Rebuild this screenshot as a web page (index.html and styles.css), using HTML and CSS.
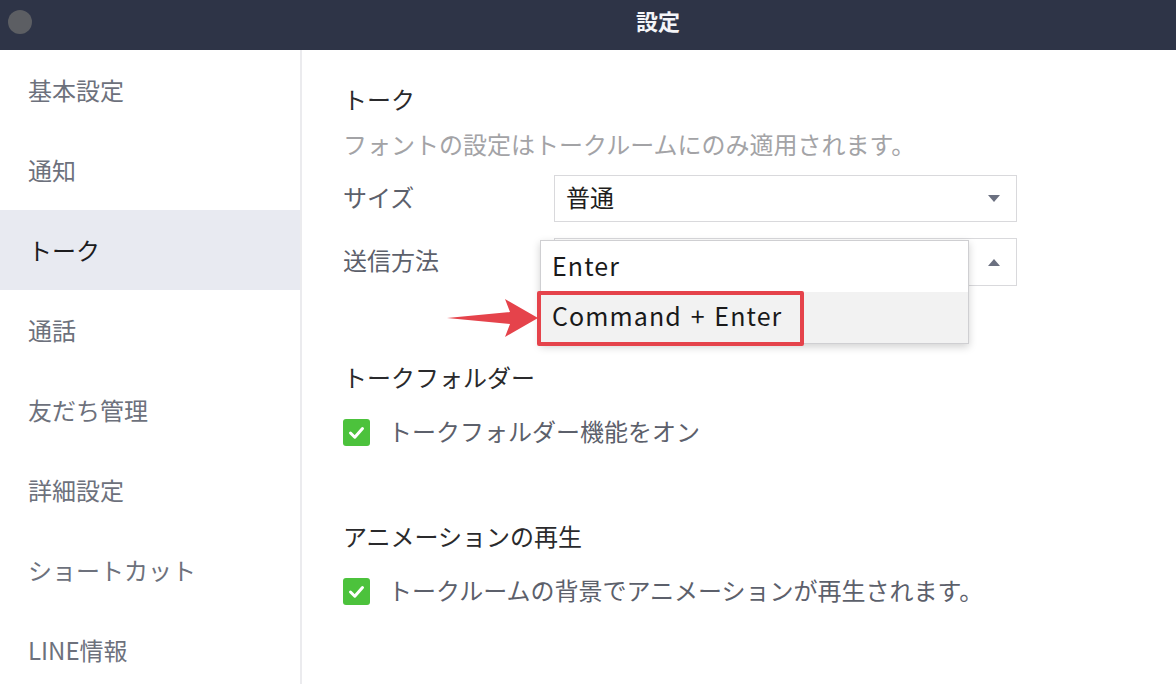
FILE: index.html
```html
<!DOCTYPE html>
<html lang="ja">
<head>
<meta charset="utf-8">
<title>設定</title>
<link rel="stylesheet" href="styles.css">
</head>
<body>
<div class="window">
  <header class="titlebar">
    <span class="dot"></span>
    <span class="title">設定</span>
  </header>
  <div class="main">
    <nav class="sidebar">
      <div class="nav-item">基本設定</div>
      <div class="nav-item">通知</div>
      <div class="nav-item active">トーク</div>
      <div class="nav-item">通話</div>
      <div class="nav-item">友だち管理</div>
      <div class="nav-item">詳細設定</div>
      <div class="nav-item">ショートカット</div>
      <div class="nav-item">LINE情報</div>
    </nav>
    <section class="content">
      <h2 class="heading first">トーク</h2>
      <p class="sub">フォントの設定はトークルームにのみ適用されます。</p>
      <div class="row">
        <span class="label">サイズ</span>
        <div class="select">
          <span class="value">普通</span>
          <span class="tri down"></span>
        </div>
      </div>
      <div class="row row2">
        <span class="label">送信方法</span>
        <div class="select tall">
          <span class="value"></span>
          <span class="tri up"></span>
          <div class="menu">
            <div class="opt">Enter</div>
            <div class="opt hover">Command + Enter</div>
            <div class="highlight"></div>
          </div>
          <svg class="pointer" width="96" height="50" viewBox="0 0 96 50">
            <polygon points="0,27 63,21 58,8 91,27 58,46 63,33" fill="#e5434b"/>
          </svg>
        </div>
      </div>
      <h2 class="heading sec">トークフォルダー</h2>
      <div class="check-row">
        <span class="check"><svg width="27" height="27" viewBox="0 0 27 27"><path d="M7.5 14 L11.8 18.2 L19.5 9.5" fill="none" stroke="#fff" stroke-width="3" stroke-linecap="round" stroke-linejoin="round"/></svg></span>
        <span class="check-text">トークフォルダー機能をオン</span>
      </div>
      <h2 class="heading sec">アニメーションの再生</h2>
      <div class="check-row">
        <span class="check"><svg width="27" height="27" viewBox="0 0 27 27"><path d="M7.5 14 L11.8 18.2 L19.5 9.5" fill="none" stroke="#fff" stroke-width="3" stroke-linecap="round" stroke-linejoin="round"/></svg></span>
        <span class="check-text">トークルームの背景でアニメーションが再生されます。</span>
      </div>
    </section>
  </div>
</div>
</body>
</html>
```

FILE: styles.css
```css
* { box-sizing: border-box; }
html, body {
  margin: 0;
  padding: 0;
  background: #fff;
}
body {
  font-family: "Noto Sans CJK JP", "Noto Sans", sans-serif;
  width: 1176px;
  height: 684px;
  overflow: hidden;
}
.titlebar {
  height: 50px;
  background: #2e3447;
  display: flex;
  align-items: flex-start;
}
.dot {
  width: 24px;
  height: 24px;
  border-radius: 50%;
  background: #5c5e63;
  margin: 10px 0 0 8px;
  flex: none;
}
.title {
  margin-left: 604px;
  color: #f4f5f8;
  font-size: 22px;
  font-weight: 700;
  line-height: 40px;
}
.main {
  display: flex;
  height: 634px;
}
.sidebar {
  width: 302px;
  flex: none;
  border-right: 2px solid #ebebee;
}
.nav-item {
  height: 80px;
  display: flex;
  align-items: center;
  padding-left: 28px;
  padding-bottom: 2px;
  font-size: 24px;
  color: #6d717c;
}
.nav-item.active {
  background: #e8eaf1;
  color: #1c1c1e;
}
.content {
  flex: 1;
  padding-left: 41px;
}
.heading {
  margin: 0;
  font-size: 24px;
  font-weight: 400;
  line-height: 32px;
  color: #2a2a2c;
}
.heading.first { margin-top: 33px; }
.heading.sec { margin-top: 75px; }
.check-row + .heading.sec { margin-top: 72px; }
.sub {
  margin: 13px 0 0;
  font-size: 24px;
  line-height: 32px;
  color: #a3a3a6;
}
.row {
  display: flex;
  align-items: center;
  margin-top: 15px;
}
.row2 { margin-top: 16px; }
.label {
  width: 211px;
  flex: none;
  font-size: 24px;
  color: #5c606b;
  padding-bottom: 5px;
}
.select {
  position: relative;
  width: 463px;
  height: 47px;
  border: 1px solid #d9d9dc;
  display: flex;
  align-items: center;
  justify-content: space-between;
  padding: 0 16px 0 11px;
}
.select.tall { height: 48px; }
.value {
  font-size: 24px;
  color: #1e1e20;
  padding-bottom: 4px;
}
.tri {
  width: 0;
  height: 0;
  border-left: 6px solid transparent;
  border-right: 6px solid transparent;
}
.tri.down { border-top: 7px solid #6b7080; }
.tri.up { border-bottom: 7px solid #6b7080; }
.menu {
  position: absolute;
  left: -15px;
  top: 1px;
  width: 429px;
  background: #fff;
  border: 1px solid #cfcfd2;
  box-shadow: 0 3px 8px rgba(0, 0, 0, 0.18);
  z-index: 2;
}
.opt {
  height: 51px;
  display: flex;
  align-items: center;
  padding-left: 11px;
  padding-bottom: 4px;
  font-size: 25px;
  letter-spacing: 1.1px;
  word-spacing: 2px;
  color: #1a1a1a;
}
.opt.hover {
  background: #f2f2f2;
  height: 51px;
  padding-bottom: 6px;
}
.highlight {
  position: absolute;
  left: -4px;
  top: 50px;
  width: 267px;
  height: 55px;
  border: 4px solid #e5434b;
  border-radius: 2px;
}
.pointer {
  position: absolute;
  left: -108px;
  top: 52px;
  z-index: 3;
}
.check-row {
  display: flex;
  align-items: center;
  height: 32px;
  margin-top: 23px;
}
.check {
  width: 27px;
  height: 27px;
  border-radius: 3px;
  background: #4cc23c;
  display: flex;
  flex: none;
}
.check-text {
  margin-left: 18px;
  font-size: 24px;
  color: #5c606b;
  padding-bottom: 3px;
}
```
